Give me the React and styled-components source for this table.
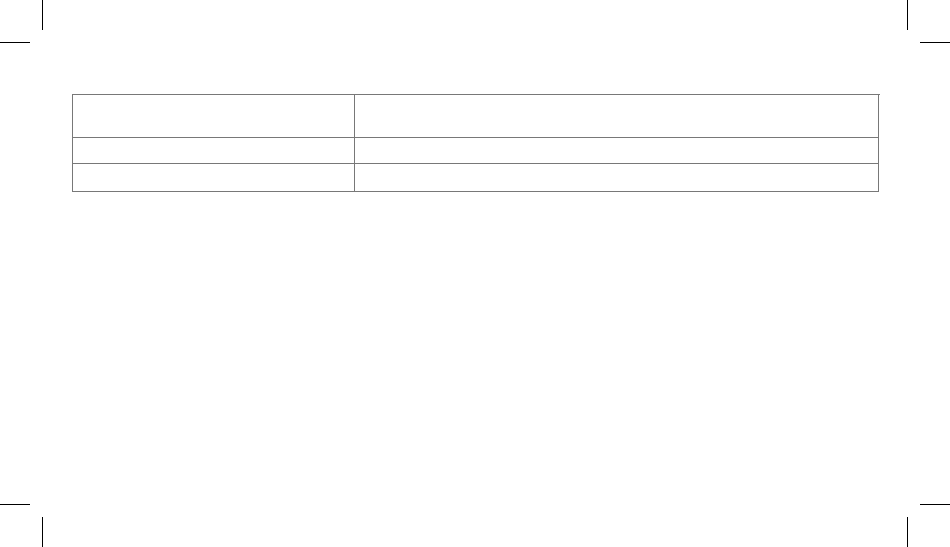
import React from "react";
import styled, { createGlobalStyle, css } from "styled-components";

const GlobalStyle = createGlobalStyle`
  html, body {
    margin: 0;
    padding: 0;
    background: #ffffff;
    font-family: "Liberation Sans", Arial, sans-serif;
  }
`;

const Page = styled.div`
  position: relative;
  width: 950px;
  height: 547px;
  box-sizing: border-box;
  padding: 94px 0 0 72px;
  background: #ffffff;
  overflow: hidden;
`;

// crop marks sit over the page corners
const Mark = styled.div`
  position: absolute;
  background: #000000;
  ${(props) =>
    props.vertical
      ? css`
          width: 1px;
          height: 30px;
        `
      : css`
          width: 30px;
          height: 1px;
        `}
`;

const Grid = styled.div`
  display: grid;
  grid-template-columns: 282px 524px;
  grid-template-rows: 43px 26px 28px;
  width: 807px;
  border-top: 1px solid #787878;
  border-left: 1px solid #787878;
`;

const Cell = styled.div`
  box-sizing: border-box;
  border-right: 1px solid #787878;
  border-bottom: 1px solid #787878;
  font-size: 12px;
  color: #333333;
`;

const rows = [
  ["", ""],
  ["", ""],
  ["", ""],
];

const marks = [
  { vertical: true, style: { left: 42, top: 0 } },
  { vertical: false, style: { left: 0, top: 42 } },
  { vertical: true, style: { left: 907, top: 0 } },
  { vertical: false, style: { left: 920, top: 42 } },
  { vertical: false, style: { left: 0, top: 504 } },
  { vertical: true, style: { left: 42, top: 517 } },
  { vertical: false, style: { left: 920, top: 504 } },
  { vertical: true, style: { left: 907, top: 517 } },
];

const App = () => {
  return (
    <>
      <GlobalStyle />
      <Page>
        {marks.map((m, i) => (
          <Mark key={i} vertical={m.vertical} style={m.style} />
        ))}
        <Grid>
          {rows.map((row, r) =>
            row.map((text, c) => <Cell key={`${r}-${c}`}>{text}</Cell>)
          )}
        </Grid>
      </Page>
    </>
  );
};

export default App;
